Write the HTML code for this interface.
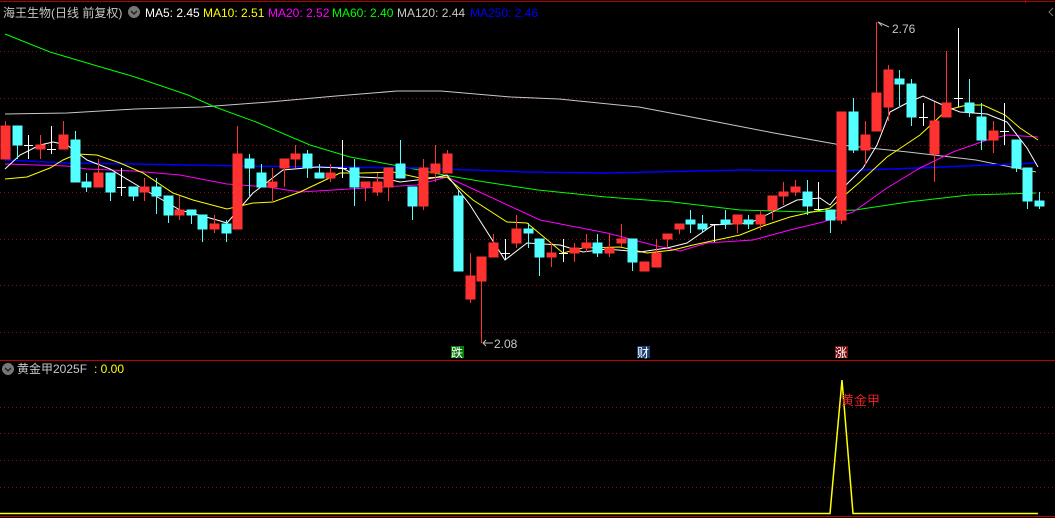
<!DOCTYPE html>
<html><head><meta charset="utf-8"><style>
html,body{margin:0;padding:0;background:#000;width:1055px;height:518px;overflow:hidden}
svg{display:block}
.r{stroke:#ff3232;fill:#ff3232}
.c{stroke:#54ffff;fill:#54ffff}
.w{stroke:#fff;fill:#fff}
text{font-family:"Liberation Sans","Noto Sans CJK SC",sans-serif}
</style></head><body>
<svg width="1055" height="518" viewBox="0 0 1055 518" shape-rendering="crispEdges">
<rect width="1055" height="518" fill="#000"/>
<line x1="0" y1="1.5" x2="1055" y2="1.5" stroke="#b00000"/>
<line x1="1025.5" y1="0" x2="1025.5" y2="3" stroke="#b00000"/>
<polyline points="1053,8 1049,12 1053,16" fill="none" stroke="#777" shape-rendering="auto"/>
<g stroke="#8a1010" stroke-dasharray="1,3">
<line x1="0" y1="51.5" x2="1055" y2="51.5"/><line x1="0" y1="98.5" x2="1055" y2="98.5"/>
<line x1="0" y1="145.5" x2="1055" y2="145.5"/><line x1="0" y1="192.5" x2="1055" y2="192.5"/>
<line x1="0" y1="239.5" x2="1055" y2="239.5"/><line x1="0" y1="285.5" x2="1055" y2="285.5"/>
<line x1="0" y1="332.5" x2="1055" y2="332.5"/>
<line x1="0" y1="407.5" x2="1055" y2="407.5"/><line x1="0" y1="433.5" x2="1055" y2="433.5"/>
<line x1="0" y1="460.5" x2="1055" y2="460.5"/><line x1="0" y1="487.5" x2="1055" y2="487.5"/>
</g>
<line x1="0" y1="360.5" x2="1055" y2="360.5" stroke="#c00000"/>
<line x1="0" y1="516.5" x2="1055" y2="516.5" stroke="#c00000"/>

<g fill="none" stroke-width="1" shape-rendering="auto">
<polyline stroke="#c8c8c8" points="5,114 67,113 135,109 202,107 269,102 336,96 397,91 441,91 511,97 559,99 639,107 707,120 774,133 841,145 908,152 976,160 1036,172"/>
<polyline stroke="#00ff00" points="5,34 50,52 94,65 135,77 188,95 215,107 256,122 310,145 350,157 404,167 444,175 485,182 538,190 606,197 673,202 740,210 808,212 855,210 908,202 969,195 1036,193"/>
<polyline stroke="#0000ff" stroke-width="1.5" points="5,160 67,163 135,164 242,166 417,168 525,172 606,173 740,170 841,171 942,167 1036,163"/>
<polyline stroke="#ff00ff" points="5,164 67,166 87,169 133,171 180,175 227,184 267,187 300,192 333,190 383,187 417,185 447,177 460,183 540,220 607,233 653,245 680,251 707,243 753,240 790,230 823,222 853,212 887,188 920,168 953,152 987,140 1007,135 1038,137"/>
<polyline stroke="#ffff00" points="5,179 27,177 50,168 63,160 77,154 97,155 120,163 143,173 173,193 193,200 227,209 253,203 273,202 300,192 340,173 363,173 393,172 420,178 447,177 450,180 473,200 507,222 527,223 563,253 583,248 620,247 647,253 673,250 693,245 740,235 760,227 790,217 830,208 860,182 887,157 920,135 947,110 967,105 983,105 1005,115 1020,128 1038,140"/>
<polyline stroke="#ffffff" points="5,169 20,155 40,145 53,142 67,145 87,160 110,169 140,187 180,210 217,220 227,223 253,193 283,170 317,167 342,168 360,177 383,178 400,182 417,180 433,178 447,175 470,205 505,260 527,243 560,245 583,252 607,249 640,252 667,248 687,243 713,225 750,223 797,200 820,198 830,205 843,188 863,168 877,145 890,112 907,103 923,96 947,107 960,112 987,114 1007,122 1027,148 1038,167"/>
</g>

<g>
<line class="r" x1="5.5" y1="121" x2="5.5" y2="159"/><rect class="r" x="1" y="126" width="9" height="33"/>
<line class="c" x1="17.5" y1="126" x2="17.5" y2="159"/><rect class="c" x="13" y="126" width="9" height="19"/>
<line class="w" x1="28.5" y1="135" x2="28.5" y2="159"/><line class="w" x1="24" y1="145.5" x2="33" y2="145.5"/>
<line class="r" x1="40.5" y1="135" x2="40.5" y2="159"/><rect class="r" x="36" y="145" width="9" height="4"/>
<line class="w" x1="51.5" y1="126" x2="51.5" y2="154"/><line class="w" x1="47" y1="149.5" x2="56" y2="149.5"/>
<line class="r" x1="63.5" y1="121" x2="63.5" y2="149"/><rect class="r" x="59" y="135" width="9" height="14"/>
<line class="c" x1="75.5" y1="131" x2="75.5" y2="182"/><rect class="c" x="71" y="140" width="9" height="42"/>
<line class="c" x1="86.5" y1="173" x2="86.5" y2="192"/><rect class="c" x="82" y="182" width="9" height="5"/>
<line class="r" x1="98.5" y1="159" x2="98.5" y2="187"/><rect class="r" x="94" y="173" width="9" height="14"/>
<line class="c" x1="110.5" y1="173" x2="110.5" y2="201"/><rect class="c" x="106" y="173" width="9" height="19"/>
<line class="w" x1="121.5" y1="168" x2="121.5" y2="196"/><line class="w" x1="117" y1="187.5" x2="126" y2="187.5"/>
<line class="c" x1="133.5" y1="187" x2="133.5" y2="201"/><rect class="c" x="129" y="187" width="9" height="9"/>
<line class="r" x1="144.5" y1="178" x2="144.5" y2="201"/><rect class="r" x="140" y="187" width="9" height="5"/>
<line class="c" x1="156.5" y1="178" x2="156.5" y2="214"/><rect class="c" x="152" y="187" width="9" height="9"/>
<line class="c" x1="168.5" y1="196" x2="168.5" y2="223"/><rect class="c" x="164" y="196" width="9" height="19"/>
<line class="r" x1="179.5" y1="196" x2="179.5" y2="220"/><rect class="r" x="175" y="210" width="9" height="5"/>
<line class="c" x1="191.5" y1="210" x2="191.5" y2="224"/><rect class="c" x="187" y="210" width="9" height="5"/>
<line class="c" x1="202.5" y1="215" x2="202.5" y2="242"/><rect class="c" x="198" y="215" width="9" height="14"/>
<line class="r" x1="214.5" y1="215" x2="214.5" y2="233"/><rect class="r" x="210" y="224" width="9" height="5"/>
<line class="c" x1="226.5" y1="220" x2="226.5" y2="242"/><rect class="c" x="222" y="224" width="9" height="9"/>
<line class="r" x1="237.5" y1="126" x2="237.5" y2="229"/><rect class="r" x="233" y="154" width="9" height="75"/>
<line class="c" x1="249.5" y1="154" x2="249.5" y2="196"/><rect class="c" x="245" y="159" width="9" height="9"/>
<line class="c" x1="261.5" y1="164" x2="261.5" y2="187"/><rect class="c" x="257" y="173" width="9" height="14"/>
<line class="r" x1="272.5" y1="168" x2="272.5" y2="201"/><rect class="r" x="268" y="182" width="9" height="5"/>
<line class="r" x1="284.5" y1="159" x2="284.5" y2="187"/><rect class="r" x="280" y="159" width="9" height="9"/>
<line class="r" x1="295.5" y1="145" x2="295.5" y2="168"/><rect class="r" x="291" y="154" width="9" height="5"/>
<line class="c" x1="307.5" y1="150" x2="307.5" y2="178"/><rect class="c" x="303" y="154" width="9" height="14"/>
<line class="c" x1="319.5" y1="164" x2="319.5" y2="178"/><rect class="c" x="315" y="173" width="9" height="5"/>
<line class="r" x1="330.5" y1="164" x2="330.5" y2="182"/><rect class="r" x="326" y="173" width="9" height="5"/>
<line class="w" x1="342.5" y1="140" x2="342.5" y2="178"/><line class="w" x1="338" y1="168.5" x2="347" y2="168.5"/>
<line class="c" x1="354.5" y1="159" x2="354.5" y2="206"/><rect class="c" x="350" y="168" width="9" height="19"/>
<line class="r" x1="365.5" y1="182" x2="365.5" y2="201"/><rect class="r" x="361" y="182" width="9" height="5"/>
<line class="r" x1="377.5" y1="173" x2="377.5" y2="196"/><rect class="r" x="373" y="182" width="9" height="10"/>
<line class="r" x1="388.5" y1="168" x2="388.5" y2="201"/><rect class="r" x="384" y="168" width="9" height="19"/>
<line class="c" x1="400.5" y1="140" x2="400.5" y2="178"/><rect class="c" x="396" y="164" width="9" height="14"/>
<line class="c" x1="412.5" y1="187" x2="412.5" y2="220"/><rect class="c" x="408" y="187" width="9" height="19"/>
<line class="r" x1="423.5" y1="159" x2="423.5" y2="210"/><rect class="r" x="419" y="168" width="9" height="38"/>
<line class="r" x1="435.5" y1="145" x2="435.5" y2="182"/><rect class="r" x="431" y="164" width="9" height="9"/>
<line class="r" x1="447.5" y1="150" x2="447.5" y2="173"/><rect class="r" x="443" y="154" width="9" height="19"/>
<line class="c" x1="458.5" y1="190" x2="458.5" y2="271"/><rect class="c" x="454" y="196" width="9" height="75"/>
<line class="r" x1="470.5" y1="253" x2="470.5" y2="303"/><rect class="r" x="466" y="276" width="9" height="23"/>
<line class="r" x1="481.5" y1="257" x2="481.5" y2="343"/><rect class="r" x="477" y="257" width="9" height="24"/>
<line class="r" x1="493.5" y1="234" x2="493.5" y2="257"/><rect class="r" x="489" y="243" width="9" height="14"/>
<line class="w" x1="505.5" y1="239" x2="505.5" y2="260"/><line class="w" x1="501" y1="253.5" x2="510" y2="253.5"/>
<line class="r" x1="516.5" y1="215" x2="516.5" y2="248"/><rect class="r" x="512" y="229" width="9" height="14"/>
<line class="c" x1="528.5" y1="223" x2="528.5" y2="248"/><rect class="c" x="524" y="229" width="9" height="4"/>
<line class="c" x1="539.5" y1="239" x2="539.5" y2="276"/><rect class="c" x="535" y="239" width="9" height="18"/>
<line class="r" x1="551.5" y1="243" x2="551.5" y2="267"/><rect class="r" x="547" y="253" width="9" height="4"/>
<line class="w" x1="563.5" y1="239" x2="563.5" y2="262"/><line class="w" x1="559" y1="253.5" x2="568" y2="253.5"/>
<line class="r" x1="574.5" y1="243" x2="574.5" y2="262"/><rect class="r" x="570" y="248" width="9" height="5"/>
<line class="r" x1="586.5" y1="234" x2="586.5" y2="252"/><rect class="r" x="582" y="243" width="9" height="5"/>
<line class="c" x1="597.5" y1="234" x2="597.5" y2="257"/><rect class="c" x="593" y="243" width="9" height="10"/>
<line class="r" x1="609.5" y1="234" x2="609.5" y2="257"/><rect class="r" x="605" y="248" width="9" height="5"/>
<line class="r" x1="621.5" y1="224" x2="621.5" y2="247"/><rect class="r" x="617" y="239" width="9" height="4"/>
<line class="c" x1="632.5" y1="239" x2="632.5" y2="271"/><rect class="c" x="628" y="239" width="9" height="23"/>
<line class="r" x1="644.5" y1="262" x2="644.5" y2="271"/><rect class="r" x="640" y="262" width="9" height="9"/>
<line class="r" x1="656.5" y1="239" x2="656.5" y2="267"/><rect class="r" x="652" y="253" width="9" height="14"/>
<line class="r" x1="667.5" y1="234" x2="667.5" y2="247"/><rect class="r" x="663" y="234" width="9" height="5"/>
<line class="r" x1="679.5" y1="224" x2="679.5" y2="234"/><rect class="r" x="675" y="224" width="9" height="5"/>
<line class="c" x1="690.5" y1="210" x2="690.5" y2="233"/><rect class="c" x="686" y="220" width="9" height="4"/>
<line class="c" x1="702.5" y1="215" x2="702.5" y2="233"/><rect class="c" x="698" y="224" width="9" height="5"/>
<line class="w" x1="714.5" y1="224" x2="714.5" y2="242"/><line class="w" x1="710" y1="224.5" x2="719" y2="224.5"/>
<line class="c" x1="725.5" y1="210" x2="725.5" y2="229"/><rect class="c" x="721" y="220" width="9" height="4"/>
<line class="r" x1="737.5" y1="215" x2="737.5" y2="233"/><rect class="r" x="733" y="215" width="9" height="9"/>
<line class="c" x1="748.5" y1="215" x2="748.5" y2="229"/><rect class="c" x="744" y="220" width="9" height="4"/>
<line class="r" x1="760.5" y1="210" x2="760.5" y2="230"/><rect class="r" x="756" y="215" width="9" height="9"/>
<line class="r" x1="772.5" y1="196" x2="772.5" y2="220"/><rect class="r" x="768" y="196" width="9" height="14"/>
<line class="r" x1="783.5" y1="182" x2="783.5" y2="205"/><rect class="r" x="779" y="192" width="9" height="4"/>
<line class="r" x1="795.5" y1="180" x2="795.5" y2="196"/><rect class="r" x="791" y="187" width="9" height="5"/>
<line class="c" x1="807.5" y1="180" x2="807.5" y2="215"/><rect class="c" x="803" y="192" width="9" height="14"/>
<line class="w" x1="818.5" y1="182" x2="818.5" y2="209"/><line class="w" x1="814" y1="209.5" x2="823" y2="209.5"/>
<line class="c" x1="830.5" y1="210" x2="830.5" y2="233"/><rect class="c" x="826" y="210" width="9" height="10"/>
<line class="r" x1="841.5" y1="112" x2="841.5" y2="224"/><rect class="r" x="837" y="112" width="9" height="108"/>
<line class="c" x1="853.5" y1="98" x2="853.5" y2="153"/><rect class="c" x="849" y="112" width="9" height="38"/>
<line class="r" x1="865.5" y1="121" x2="865.5" y2="165"/><rect class="r" x="861" y="135" width="9" height="15"/>
<line class="r" x1="876.5" y1="22" x2="876.5" y2="131"/><rect class="r" x="872" y="93" width="9" height="38"/>
<line class="r" x1="888.5" y1="65" x2="888.5" y2="121"/><rect class="r" x="884" y="70" width="9" height="37"/>
<line class="c" x1="899.5" y1="70" x2="899.5" y2="106"/><rect class="c" x="895" y="79" width="9" height="5"/>
<line class="c" x1="911.5" y1="79" x2="911.5" y2="126"/><rect class="c" x="907" y="84" width="9" height="33"/>
<line class="w" x1="923.5" y1="103" x2="923.5" y2="126"/><line class="w" x1="919" y1="117.5" x2="928" y2="117.5"/>
<line class="r" x1="934.5" y1="102" x2="934.5" y2="182"/><rect class="r" x="930" y="121" width="9" height="33"/>
<line class="r" x1="946.5" y1="51" x2="946.5" y2="117"/><rect class="r" x="942" y="103" width="9" height="14"/>
<line class="w" x1="958.5" y1="28" x2="958.5" y2="107"/><line class="w" x1="954" y1="98.5" x2="963" y2="98.5"/>
<line class="c" x1="969.5" y1="79" x2="969.5" y2="117"/><rect class="c" x="965" y="103" width="9" height="9"/>
<line class="c" x1="981.5" y1="103" x2="981.5" y2="150"/><rect class="c" x="977" y="117" width="9" height="23"/>
<line class="r" x1="993.5" y1="121" x2="993.5" y2="153"/><rect class="r" x="989" y="131" width="9" height="9"/>
<line class="w" x1="1004.5" y1="103" x2="1004.5" y2="145"/><line class="w" x1="1000" y1="131.5" x2="1009" y2="131.5"/>
<line class="c" x1="1016.5" y1="140" x2="1016.5" y2="172"/><rect class="c" x="1012" y="140" width="9" height="28"/>
<line class="c" x1="1027.5" y1="168" x2="1027.5" y2="209"/><rect class="c" x="1023" y="168" width="9" height="33"/>
<line class="c" x1="1039.5" y1="192" x2="1039.5" y2="209"/><rect class="c" x="1035" y="201" width="9" height="5"/>
</g>

<g shape-rendering="auto">
<polyline points="878,22 882,26" stroke="#bbb" fill="none"/>
<line x1="878" y1="22" x2="889" y2="27" stroke="#bbb"/>
<text x="892" y="33" font-size="12" fill="#c8c8c8">2.76</text>
<line x1="483" y1="343" x2="493" y2="343" stroke="#bbb"/>
<polyline points="486,340 483,343 486,346" stroke="#bbb" fill="none"/>
<text x="494" y="348" font-size="12" fill="#c8c8c8">2.08</text>
</g>
<rect x="451" y="346" width="13" height="12" fill="#0a7a0a"/>
<text x="451" y="357" font-size="12" fill="#fff">跌</text>
<rect x="637" y="346" width="13" height="12" fill="#1a3c6e"/>
<text x="637" y="357" font-size="12" fill="#fff">财</text>
<rect x="835" y="346" width="13" height="12" fill="#7a1010"/>
<text x="835" y="357" font-size="12" fill="#fff">涨</text>

<text x="3" y="17" font-size="12" fill="#c8c8c8">海王生物(日线 前复权)</text>
<circle cx="134" cy="12" r="6" fill="#777"/>
<polyline points="131,11 134,14 137,11" stroke="#222" stroke-width="1.5" fill="none" shape-rendering="auto"/>
<text y="17" font-size="12"><tspan x="145" fill="#fff">MA5: 2.45</tspan><tspan x="203" fill="#ffff00">MA10: 2.51</tspan><tspan x="268" fill="#ff00ff">MA20: 2.52</tspan><tspan x="332" fill="#00ff00">MA60: 2.40</tspan><tspan x="397" fill="#c8c8c8">MA120: 2.44</tspan><tspan x="470" fill="#0000ff">MA250: 2.46</tspan></text>

<circle cx="8" cy="369" r="6" fill="#777"/>
<polyline points="5,368 8,371 11,368" stroke="#222" stroke-width="1.5" fill="none" shape-rendering="auto"/>
<text x="17" y="373" font-size="12" fill="#c8c8c8">黄金甲2025F</text>
<text x="94" y="373" font-size="12" fill="#ffff00">: 0.00</text>
<polyline shape-rendering="auto" points="0,513.5 830,513.5 842,380 853,513.5 1038,513.5" stroke="#ffff00" stroke-width="1.5" fill="none"/>
<text x="841" y="405" font-size="13" fill="#e02020">黄金甲</text>
</svg>
</body></html>
